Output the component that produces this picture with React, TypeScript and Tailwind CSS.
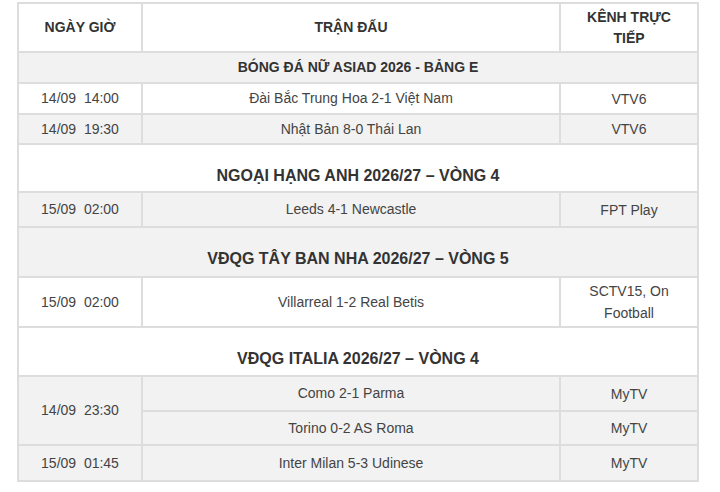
type Match = {
  time?: string;
  rowSpan?: number;
  game: string;
  channel: React.ReactNode;
  gray: boolean;
  h: string;
};

type Section = {
  title: string;
  gray: boolean;
  big: boolean;
  h: string;
  matches: Match[];
};

const sections: Section[] = [
  {
    title: 'BÓNG ĐÁ NỮ ASIAD 2026 - BẢNG E',
    gray: true,
    big: false,
    h: 'h-[31px]',
    matches: [
      { time: '14/09\u00a0\u00a014:00', game: 'Đài Bắc Trung Hoa 2-1 Việt Nam', channel: 'VTV6', gray: false, h: 'h-[31px]' },
      { time: '14/09\u00a0\u00a019:30', game: 'Nhật Bản 8-0 Thái Lan', channel: 'VTV6', gray: true, h: 'h-[30px]' },
    ],
  },
  {
    title: 'NGOẠI HẠNG ANH 2026/27 – VÒNG 4',
    gray: false,
    big: true,
    h: 'h-[48px]',
    matches: [
      { time: '15/09\u00a0\u00a002:00', game: 'Leeds 4-1 Newcastle', channel: 'FPT Play', gray: true, h: 'h-[35px]' },
    ],
  },
  {
    title: 'VĐQG TÂY BAN NHA 2026/27 – VÒNG 5',
    gray: true,
    big: true,
    h: 'h-[50px]',
    matches: [
      {
        time: '15/09\u00a0\u00a002:00',
        game: 'Villarreal 1-2 Real Betis',
        channel: (
          <>
            SCTV15, On
            <br />
            Football
          </>
        ),
        gray: false,
        h: 'h-[50px]',
      },
    ],
  },
  {
    title: 'VĐQG ITALIA 2026/27 – VÒNG 4',
    gray: false,
    big: true,
    h: 'h-[49px]',
    matches: [
      { time: '14/09\u00a0\u00a023:30', rowSpan: 2, game: 'Como 2-1 Parma', channel: 'MyTV', gray: true, h: 'h-[35px]' },
      { game: 'Torino 0-2 AS Roma', channel: 'MyTV', gray: true, h: 'h-[34px]' },
      { time: '15/09\u00a0\u00a001:45', game: 'Inter Milan 5-3 Udinese', channel: 'MyTV', gray: true, h: 'h-[36px]' },
    ],
  },
];

const cell = 'border-r-2 border-b-2 border-[#dddddd] text-center align-middle';

export default function App() {
  return (
    <div className="min-h-[492px] bg-white pt-[2px] pl-[17px] font-['Liberation_Sans',Arial,sans-serif] text-[14px] text-[#444444]">
      <table className="w-[682px] table-fixed border-separate border-spacing-0 border-l-2 border-t-2 border-[#dddddd]">
        <thead>
          <tr className="bg-white font-bold text-[#333333]">
            <th className={`${cell} h-[49px] w-[124px]`}>NGÀY GIỜ</th>
            <th className={`${cell} w-[418px]`}>TRẬN ĐẤU</th>
            <th className={`${cell} w-[138px] px-4 leading-[21px]`}>KÊNH TRỰC TIẾP</th>
          </tr>
        </thead>
        <tbody>
          {sections.map((s) => (
            <SectionRows key={s.title} section={s} />
          ))}
        </tbody>
      </table>
    </div>
  );
}

function SectionRows({ section }: { section: Section }) {
  const bg = section.gray ? 'bg-[#f2f2f2]' : 'bg-white';
  return (
    <>
      <tr className={bg}>
        <td
          colSpan={3}
          className={
            section.big
              ? `${cell} ${section.h} align-top pt-[21px] text-[16px] font-bold leading-[20px] text-[#333333]`
              : `${cell} ${section.h} font-bold text-[#333333]`
          }
        >
          {section.title}
        </td>
      </tr>
      {section.matches.map((m) => (
        <tr key={m.game} className={m.gray ? 'bg-[#f2f2f2]' : 'bg-white'}>
          {m.time && (
            <td rowSpan={m.rowSpan} className={`${cell} ${m.h}`}>
              {m.time}
            </td>
          )}
          <td className={`${cell} ${m.h}`}>{m.game}</td>
          <td className={`${cell} ${m.h} leading-[22px]`}>{m.channel}</td>
        </tr>
      ))}
    </>
  );
}
